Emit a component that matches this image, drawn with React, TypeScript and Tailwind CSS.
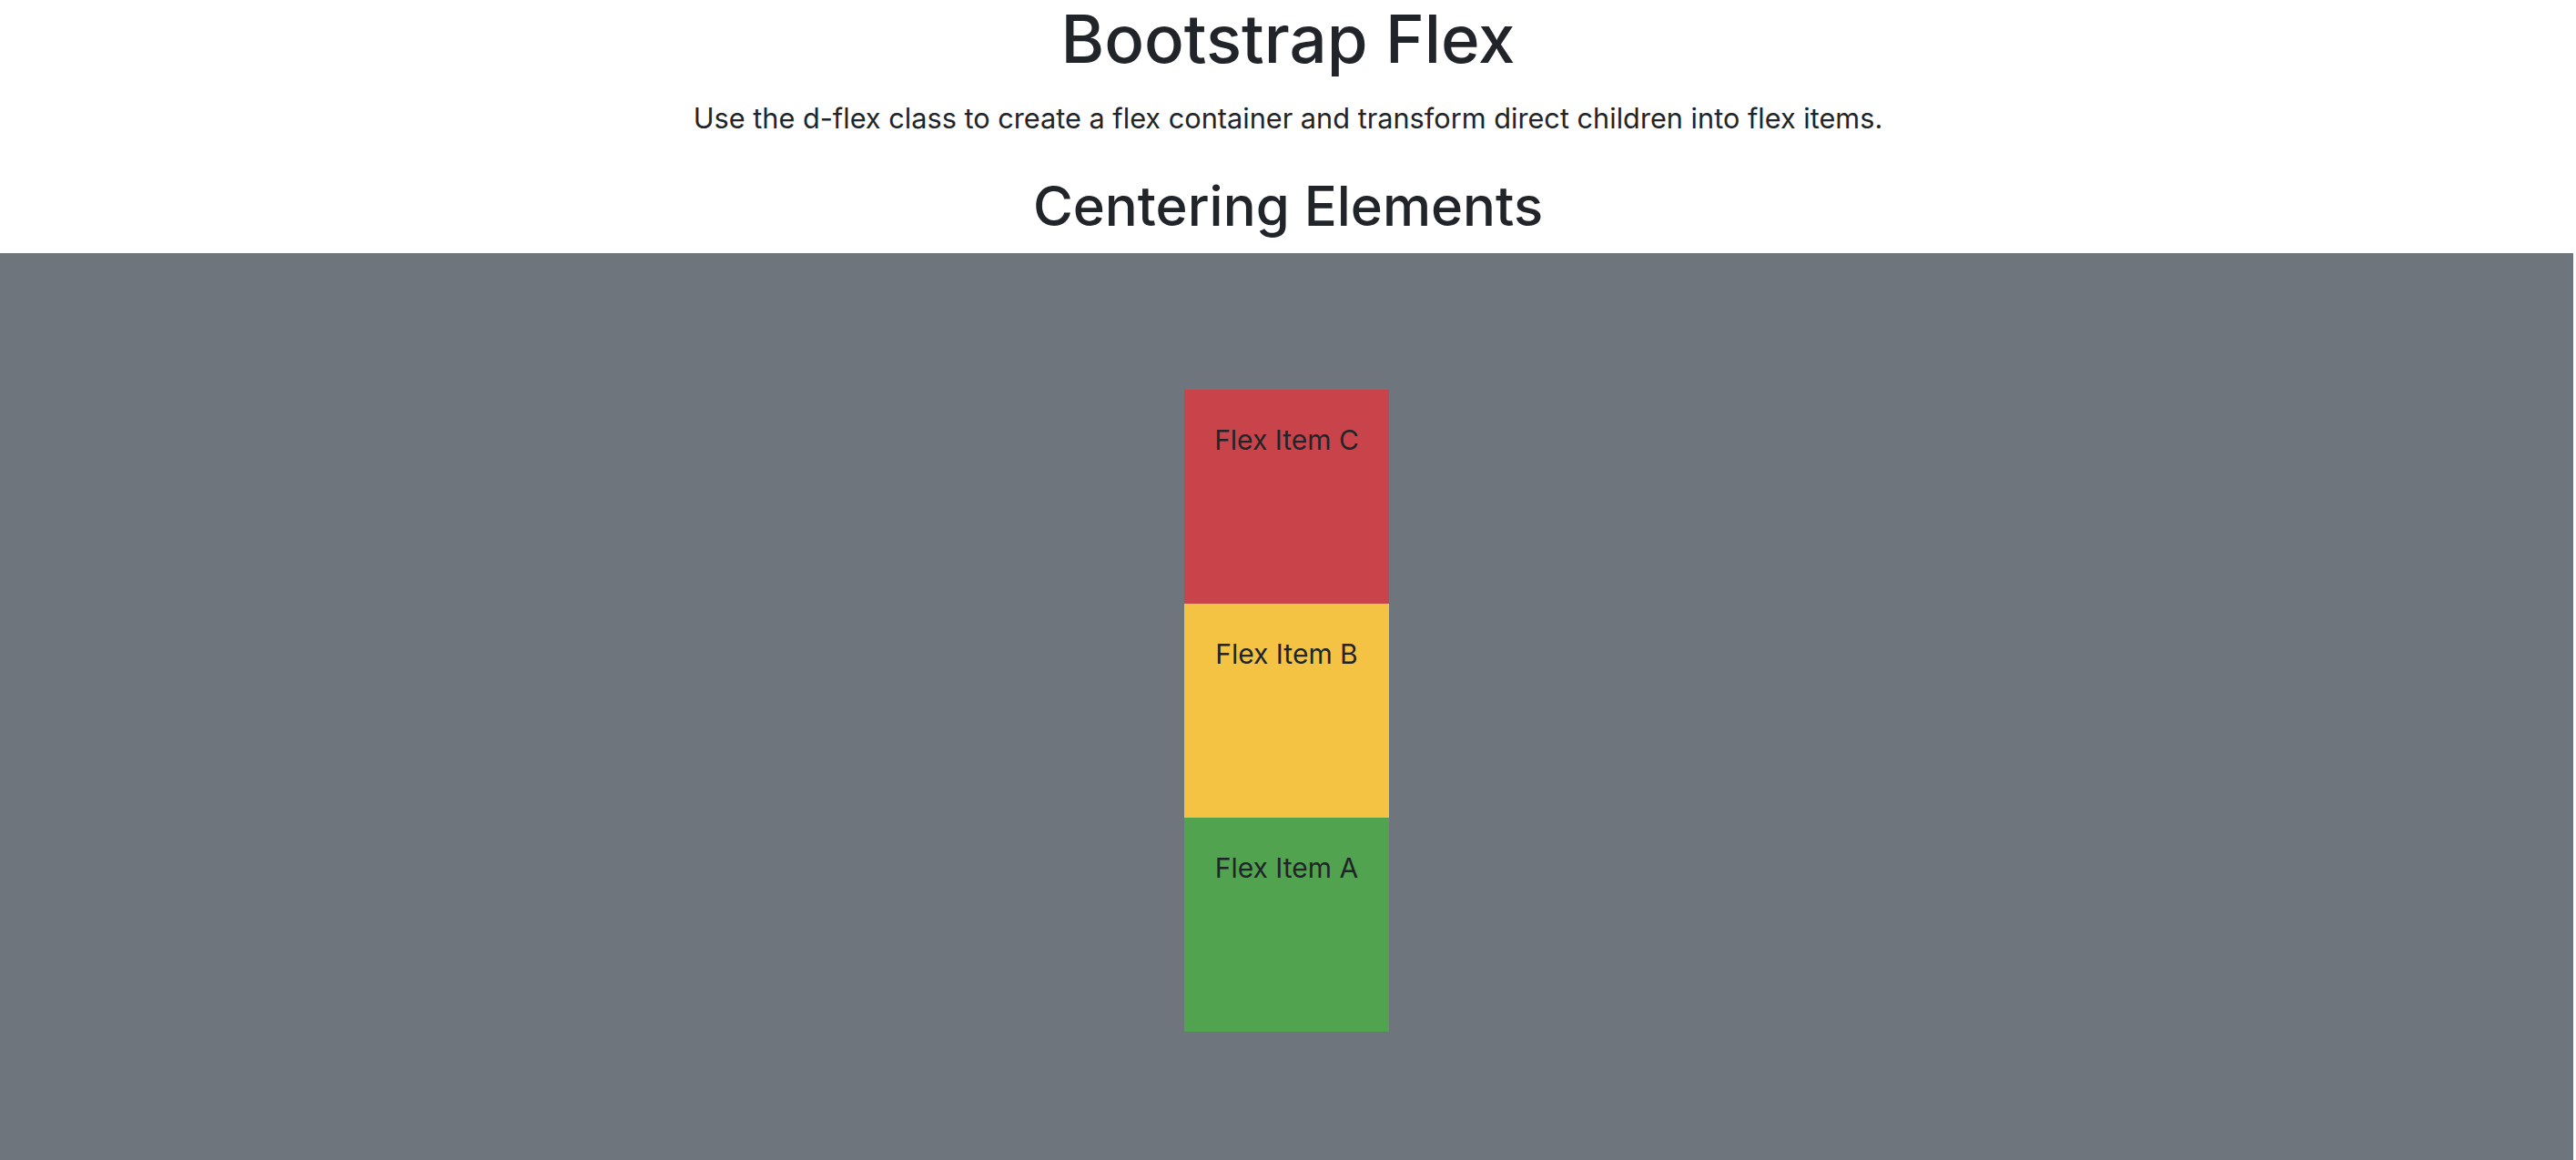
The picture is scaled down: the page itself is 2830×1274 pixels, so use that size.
import React from "react";

const items = [
  { label: "Flex Item C", bg: "bg-[#c9444a]" },
  { label: "Flex Item B", bg: "bg-[#f5c344]" },
  { label: "Flex Item A", bg: "bg-[#52a350]" },
];

export default function App() {
  return (
    <div className="min-h-[1274px] bg-white text-center text-[#212529] font-['Inter',sans-serif]">
      <h1 className="m-0 text-[72.6px] leading-[1.2] font-medium">Bootstrap Flex</h1>
      <p className="mt-[20px] text-[30.7px] leading-[1.5]">
        Use the d-flex class to create a flex container and transform direct children into flex items.
      </p>
      <h2 className="mt-[38px] text-[59.8px] leading-[1.2] font-medium">Centering Elements</h2>
      <div className="mt-[15px] mr-[3px] flex h-[996px] justify-center bg-[#6e757d] pt-[150px]">
        <div className="flex flex-col">
          {items.map((it) => (
            <div
              key={it.label}
              className={`${it.bg} h-[235px] w-[225px] whitespace-nowrap pt-[33px] text-[30px] leading-[1.5]`}
            >
              {it.label}
            </div>
          ))}
        </div>
      </div>
    </div>
  );
}
